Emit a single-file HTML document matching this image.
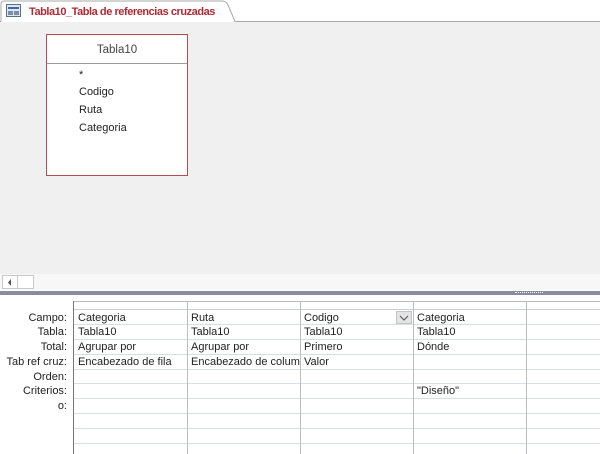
<!DOCTYPE html><html><head><style>
*{margin:0;padding:0;box-sizing:border-box}
body{width:600px;height:454px;position:relative;overflow:hidden;background:#fff;font-family:"Liberation Sans",sans-serif;font-size:11px;color:#222}
.a{position:absolute}
.t{position:absolute;white-space:nowrap;line-height:14px}
.h{position:absolute;height:1px;background:#d9dde5}
.v{position:absolute;width:1px;background:#b9bcc2}
.l{position:absolute;right:533px;text-align:right;white-space:nowrap;line-height:14px}
.g .t,.g .l{margin-top:1px}
</style></head><body>
<div class="a" style="left:0;top:0;width:600px;height:22px;background:#fff"></div>
<svg class="a" style="left:0;top:0" width="600" height="23"><path d="M0 21.5 H1 V4 Q1 1 4 1 H222 Q226 1 228 5 L235 21.5 H600" fill="#fff" stroke="#a8a8a8"/></svg>
<svg class="a" style="left:6px;top:4px" width="16" height="14"><rect x="0.5" y="0.5" width="14" height="12" fill="#dfe6ee" stroke="#5a6f88"/><rect x="2" y="3" width="11" height="2" fill="#3a6aa8"/><rect x="2" y="7" width="5" height="4" fill="#7a8ea8"/><rect x="8" y="7" width="5" height="4" fill="#7a8ea8"/></svg>
<div class="t" style="left:29px;top:5px;color:#b02834;font-weight:bold;font-size:11px;letter-spacing:-0.45px">Tabla10_Tabla de referencias cruzadas</div>
<div class="a" style="left:0;top:22px;width:600px;height:268px;background:#f0f0f0"></div>
<div class="a" style="left:46px;top:34px;width:142px;height:142px;background:#fff;border:1px solid #b84a52"></div>
<div class="a" style="left:47px;top:63px;width:140px;height:1px;background:#9a9ca4"></div>
<div class="t" style="left:47px;top:43px;width:140px;text-align:center;color:#444;font-size:11.5px">Tabla10</div>
<div class="t" style="left:79px;top:68px">*</div>
<div class="t" style="left:79px;top:85px">Codigo</div>
<div class="t" style="left:79px;top:103px">Ruta</div>
<div class="t" style="left:79px;top:121px">Categoria</div>
<div class="a" style="left:0;top:274px;width:600px;height:16px;background:#f7f7f7"></div>
<div class="a" style="left:2px;top:275px;width:32px;height:14px;background:#fff;border:1px solid #c8c8c8"></div>
<div class="a" style="left:17px;top:275px;width:1px;height:14px;background:#c8c8c8"></div>
<svg class="a" style="left:7px;top:279px" width="6" height="7"><path d="M4 0 L1 3.5 L4 7Z" fill="#555"/></svg>
<div class="a" style="left:0;top:291px;width:600px;height:4px;background:#8c8aa2"></div>
<div class="a" style="left:515px;top:292px;width:28px;height:1px;border-top:1px dotted #fff"></div>
<div class="a" style="left:74px;top:302px;width:526px;height:152px;background:#fff"></div>
<div class="a" style="left:74px;top:301px;width:526px;height:1px;background:#b8bac0"></div>
<div class="h" style="left:74px;top:309px;width:526px;background:#c9ccd4"></div>
<div class="h" style="left:74px;top:324px;width:526px"></div>
<div class="h" style="left:74px;top:339px;width:526px"></div>
<div class="h" style="left:74px;top:354px;width:526px"></div>
<div class="h" style="left:74px;top:369px;width:526px"></div>
<div class="h" style="left:74px;top:383px;width:526px"></div>
<div class="h" style="left:74px;top:398px;width:526px"></div>
<div class="h" style="left:74px;top:413px;width:526px"></div>
<div class="h" style="left:74px;top:428px;width:526px"></div>
<div class="h" style="left:74px;top:443px;width:526px"></div>
<div class="v" style="left:73px;top:301px;height:153px;background:#777"></div>
<div class="v" style="left:187px;top:301px;height:153px"></div>
<div class="v" style="left:300px;top:301px;height:153px"></div>
<div class="v" style="left:413px;top:301px;height:153px"></div>
<div class="v" style="left:526px;top:301px;height:153px"></div>
<div class="g">
<div class="l" style="top:310px">Campo:</div>
<div class="l" style="top:324px">Tabla:</div>
<div class="l" style="top:339px">Total:</div>
<div class="l" style="top:354px">Tab ref cruz:</div>
<div class="l" style="top:369px">Orden:</div>
<div class="l" style="top:383px">Criterios:</div>
<div class="l" style="top:398px">o:</div>
<div class="t" style="left:78px;top:310px">Categoria</div>
<div class="t" style="left:78px;top:324px">Tabla10</div>
<div class="t" style="left:78px;top:339px">Agrupar por</div>
<div class="t" style="left:78px;top:354px">Encabezado de fila</div>
<div class="t" style="left:191px;top:310px">Ruta</div>
<div class="t" style="left:191px;top:324px">Tabla10</div>
<div class="t" style="left:191px;top:339px">Agrupar por</div>
<div class="t" style="left:191px;top:354px;width:109px;overflow:hidden">Encabezado de columna</div>
<div class="t" style="left:304px;top:310px">Codigo</div>
<div class="t" style="left:304px;top:324px">Tabla10</div>
<div class="t" style="left:304px;top:339px">Primero</div>
<div class="t" style="left:304px;top:354px">Valor</div>
<div class="t" style="left:417px;top:310px">Categoria</div>
<div class="t" style="left:417px;top:324px">Tabla10</div>
<div class="t" style="left:417px;top:339px">Dónde</div>
<div class="t" style="left:417px;top:383px">"Diseño"</div>
</div>
<div class="a" style="left:396px;top:311px;width:16px;height:13px;background:#e4e4e4;border:1px solid #c4c4c4"></div>
<svg class="a" style="left:399px;top:315px" width="10" height="6"><path d="M1 1 L5 5 L9 1" fill="none" stroke="#555"/></svg>
</body></html>
